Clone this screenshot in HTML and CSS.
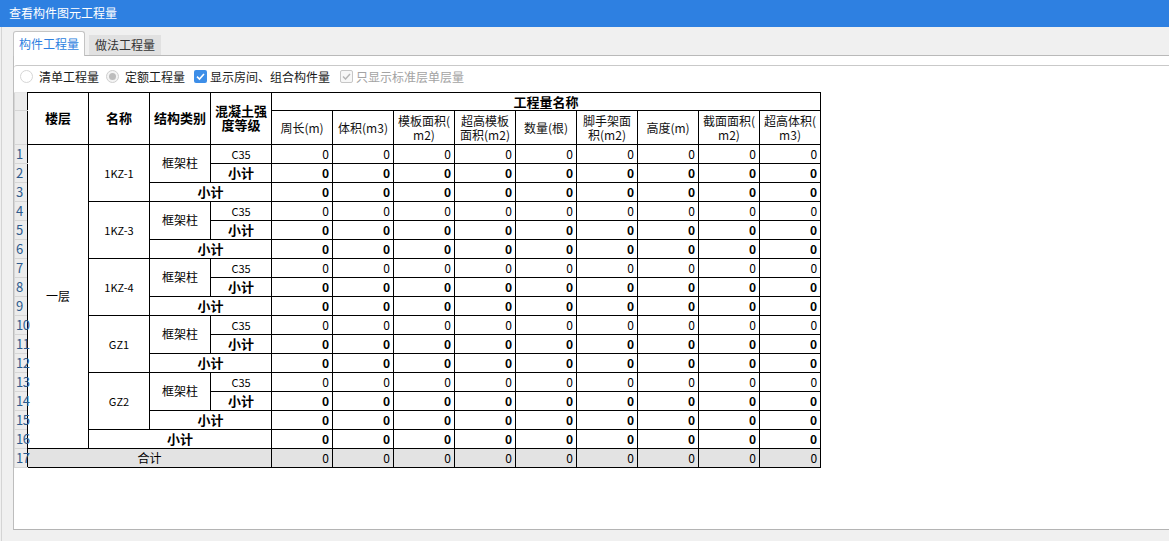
FILE: index.html
```html
<!DOCTYPE html>
<html lang="zh-CN">
<head>
<meta charset="utf-8">
<title>查看构件图元工程量</title>
<link rel="stylesheet" href="styles.css">
</head>
<body>
<div class="titlebar">查看构件图元工程量</div>
<div class="window">
  <div class="gutter"></div>
  <div class="main">
    <div class="tabs">
      <div class="tab active">构件工程量</div>
      <div class="tab">做法工程量</div>
    </div>
    <div class="panel">
      <div class="box">
        <div class="options">
          <span class="radio"></span><span class="lbl l1">清单工程量</span>
          <span class="radio dis"><span class="dot"></span></span><span class="lbl l2">定额工程量</span>
          <span class="check on"><svg viewBox="0 0 13 13" width="13" height="13"><path d="M3 6.6 L5.5 9 L10 4" fill="none" stroke="#fff" stroke-width="1.6"/></svg></span><span class="lbl l3">显示房间、组合构件量</span>
          <span class="check dis"><svg viewBox="0 0 13 13" width="13" height="13"><path d="M3 6.6 L5.5 9 L10 4" fill="none" stroke="#b4b4b4" stroke-width="1.4"/></svg></span><span class="lbl l4">只显示标准层单层量</span>
        </div>
        <table class="qty">
          <colgroup>
            <col class="c-rn"><col class="c"><col class="c"><col class="c"><col class="c">
            <col class="c"><col class="c"><col class="c"><col class="c"><col class="c"><col class="c"><col class="c"><col class="c"><col class="c">
          </colgroup>
          <thead>
            <tr class="h1">
              <td class="rn"></td>
              <th rowspan="2">楼层</th>
              <th rowspan="2">名称</th>
              <th rowspan="2">结构类别</th>
              <th rowspan="2" class="tight">混凝土强<br>度等级</th>
              <th colspan="9" class="group">工程量名称</th>
            </tr>
            <tr class="h2">
              <td class="rn"></td>
              <td class="sh">周长(m)</td>
              <td class="sh">体积(m3)</td>
              <td class="sh">模板面积(<br>m2)</td>
              <td class="sh">超高模板<br>面积(m2)</td>
              <td class="sh">数量(根)</td>
              <td class="sh">脚手架面<br>积(m2)</td>
              <td class="sh">高度(m)</td>
              <td class="sh">截面面积(<br>m2)</td>
              <td class="sh">超高体积(<br>m3)</td>
            </tr>
          </thead>
          <tbody>
            <tr>
              <td class="rn">1</td>
              <td rowspan="16" class="floor">一层</td>
              <td rowspan="3" class="name">1KZ-1</td>
              <td rowspan="2" class="kind">框架柱</td>
              <td class="grade">C35</td>
              <td class="v">0</td><td class="v">0</td><td class="v">0</td><td class="v">0</td><td class="v">0</td><td class="v">0</td><td class="v">0</td><td class="v">0</td><td class="v">0</td>
            </tr>
            <tr class="sub">
              <td class="rn">2</td>
              <td class="lab">小计</td>
              <td class="v">0</td><td class="v">0</td><td class="v">0</td><td class="v">0</td><td class="v">0</td><td class="v">0</td><td class="v">0</td><td class="v">0</td><td class="v">0</td>
            </tr>
            <tr class="sub">
              <td class="rn">3</td>
              <td colspan="2" class="lab">小计</td>
              <td class="v">0</td><td class="v">0</td><td class="v">0</td><td class="v">0</td><td class="v">0</td><td class="v">0</td><td class="v">0</td><td class="v">0</td><td class="v">0</td>
            </tr>
            <tr>
              <td class="rn">4</td>
              <td rowspan="3" class="name">1KZ-3</td>
              <td rowspan="2" class="kind">框架柱</td>
              <td class="grade">C35</td>
              <td class="v">0</td><td class="v">0</td><td class="v">0</td><td class="v">0</td><td class="v">0</td><td class="v">0</td><td class="v">0</td><td class="v">0</td><td class="v">0</td>
            </tr>
            <tr class="sub">
              <td class="rn">5</td>
              <td class="lab">小计</td>
              <td class="v">0</td><td class="v">0</td><td class="v">0</td><td class="v">0</td><td class="v">0</td><td class="v">0</td><td class="v">0</td><td class="v">0</td><td class="v">0</td>
            </tr>
            <tr class="sub">
              <td class="rn">6</td>
              <td colspan="2" class="lab">小计</td>
              <td class="v">0</td><td class="v">0</td><td class="v">0</td><td class="v">0</td><td class="v">0</td><td class="v">0</td><td class="v">0</td><td class="v">0</td><td class="v">0</td>
            </tr>
            <tr>
              <td class="rn">7</td>
              <td rowspan="3" class="name">1KZ-4</td>
              <td rowspan="2" class="kind">框架柱</td>
              <td class="grade">C35</td>
              <td class="v">0</td><td class="v">0</td><td class="v">0</td><td class="v">0</td><td class="v">0</td><td class="v">0</td><td class="v">0</td><td class="v">0</td><td class="v">0</td>
            </tr>
            <tr class="sub">
              <td class="rn">8</td>
              <td class="lab">小计</td>
              <td class="v">0</td><td class="v">0</td><td class="v">0</td><td class="v">0</td><td class="v">0</td><td class="v">0</td><td class="v">0</td><td class="v">0</td><td class="v">0</td>
            </tr>
            <tr class="sub">
              <td class="rn">9</td>
              <td colspan="2" class="lab">小计</td>
              <td class="v">0</td><td class="v">0</td><td class="v">0</td><td class="v">0</td><td class="v">0</td><td class="v">0</td><td class="v">0</td><td class="v">0</td><td class="v">0</td>
            </tr>
            <tr>
              <td class="rn">10</td>
              <td rowspan="3" class="name">GZ1</td>
              <td rowspan="2" class="kind">框架柱</td>
              <td class="grade">C35</td>
              <td class="v">0</td><td class="v">0</td><td class="v">0</td><td class="v">0</td><td class="v">0</td><td class="v">0</td><td class="v">0</td><td class="v">0</td><td class="v">0</td>
            </tr>
            <tr class="sub">
              <td class="rn">11</td>
              <td class="lab">小计</td>
              <td class="v">0</td><td class="v">0</td><td class="v">0</td><td class="v">0</td><td class="v">0</td><td class="v">0</td><td class="v">0</td><td class="v">0</td><td class="v">0</td>
            </tr>
            <tr class="sub">
              <td class="rn">12</td>
              <td colspan="2" class="lab">小计</td>
              <td class="v">0</td><td class="v">0</td><td class="v">0</td><td class="v">0</td><td class="v">0</td><td class="v">0</td><td class="v">0</td><td class="v">0</td><td class="v">0</td>
            </tr>
            <tr>
              <td class="rn">13</td>
              <td rowspan="3" class="name">GZ2</td>
              <td rowspan="2" class="kind">框架柱</td>
              <td class="grade">C35</td>
              <td class="v">0</td><td class="v">0</td><td class="v">0</td><td class="v">0</td><td class="v">0</td><td class="v">0</td><td class="v">0</td><td class="v">0</td><td class="v">0</td>
            </tr>
            <tr class="sub">
              <td class="rn">14</td>
              <td class="lab">小计</td>
              <td class="v">0</td><td class="v">0</td><td class="v">0</td><td class="v">0</td><td class="v">0</td><td class="v">0</td><td class="v">0</td><td class="v">0</td><td class="v">0</td>
            </tr>
            <tr class="sub">
              <td class="rn">15</td>
              <td colspan="2" class="lab">小计</td>
              <td class="v">0</td><td class="v">0</td><td class="v">0</td><td class="v">0</td><td class="v">0</td><td class="v">0</td><td class="v">0</td><td class="v">0</td><td class="v">0</td>
            </tr>
            <tr class="sub">
              <td class="rn">16</td>
              <td colspan="3" class="lab">小计</td>
              <td class="v">0</td><td class="v">0</td><td class="v">0</td><td class="v">0</td><td class="v">0</td><td class="v">0</td><td class="v">0</td><td class="v">0</td><td class="v">0</td>
            </tr>
            <tr class="total">
              <td class="rn">17</td>
              <td colspan="4" class="lab">合计</td>
              <td class="v">0</td><td class="v">0</td><td class="v">0</td><td class="v">0</td><td class="v">0</td><td class="v">0</td><td class="v">0</td><td class="v">0</td><td class="v">0</td>
            </tr>
          </tbody>
        </table>
      </div>
    </div>
    <div class="footer"></div>
  </div>
</div>
</body>
</html>
```

FILE: styles.css
```css
* { box-sizing: border-box; }
html, body {
  margin: 0;
  padding: 0;
}
body {
  width: 1169px;
  height: 541px;
  overflow: hidden;
  background: #f0f0f0;
  font-family: "Noto Sans CJK SC", "Microsoft YaHei", sans-serif;
  font-size: 12px;
  color: #1a1a1a;
  display: flex;
  flex-direction: column;
}
.titlebar {
  height: 27px;
  flex: none;
  background: #2e80e1;
  color: #ffffff;
  font-size: 12px;
  line-height: 26px;
  padding-left: 9px;
}
.window {
  flex: 1;
  display: flex;
  min-height: 0;
}
.gutter {
  width: 13px;
  flex: none;
  background: linear-gradient(to right, #f0f0f0 1px, #d4d4d4 1px, #d4d4d4 2px, #f0f0f0 2px);
}
.main {
  flex: 1;
  display: flex;
  flex-direction: column;
  min-width: 0;
}
.tabs {
  height: 29px;
  flex: none;
  display: flex;
  align-items: flex-end;
  border-bottom: 1px solid #b9b9b9;
}
.tab {
  width: 72px;
  height: 20px;
  background: #e1e1e1;
  color: #333;
  font-size: 12px;
  line-height: 20px;
  padding-left: 6px;
  margin-left: 4px;
}
.tab.active {
  margin-left: 0;
  height: 25px;
  margin-bottom: -1px;
  background: #ffffff;
  color: #2e7fe0;
  border: 1px solid #c4c4c4;
  border-bottom: none;
  border-radius: 3px 3px 0 0;
  line-height: 23px;
  padding-left: 5px;
}
.panel {
  flex: 1;
  background: #ffffff;
  border-left: 1px solid #bdbdbd;
  border-bottom: 1px solid #b4b4b4;
  padding-top: 9px;
  min-height: 0;
}
.box {
  border-top: 1px solid #c9c9c9;
  border-top-left-radius: 3px;
  height: 100%;
}
.options {
  height: 26px;
  display: flex;
  align-items: center;
  padding-left: 6px;
  padding-bottom: 5px;
  font-size: 12px;
  color: #1a1a1a;
}
.lbl { margin-left: 6px; }
.lbl.l1 { margin-right: 7px; }
.lbl.l2 { margin-right: 9px; }
.lbl.l3 { margin-left: 3px; margin-right: 10px; }
.lbl.l4 { margin-left: 3px; color: #a3a3a3; }
.radio {
  width: 13px;
  height: 13px;
  border-radius: 50%;
  border: 1px solid #d6d6d6;
  background: #fff;
  display: flex;
  align-items: center;
  justify-content: center;
}
.radio.dis { border-color: #cfcfcf; background: #f4f4f4; }
.radio .dot {
  width: 7px;
  height: 7px;
  border-radius: 50%;
  background: #bdbdbd;
}
.check {
  width: 13px;
  height: 13px;
  border-radius: 2px;
  display: block;
}
.check svg { display: block; }
.check.on { background: #3d8ee8; }
.check.dis { border: 1px solid #c6c6c6; background: #f7f7f7; }
.check.dis svg { margin: -1px; }

.qty {
  border-collapse: collapse;
  table-layout: fixed;
  width: 806px;
  font-size: 12px;
  color: #000;
}
.qty col.c-rn { width: 13px; }
.qty col.c { width: 61px; }
.qty td, .qty th {
  border: 1px solid #000;
  padding: 0;
  overflow: hidden;
  white-space: nowrap;
}
.qty th {
  font-weight: bold;
  font-size: 13px;
  text-align: center;
  line-height: 15px;
  padding-bottom: 2px;
  overflow: visible;
}
.qty th.tight { line-height: 14px; }
.qty tr.h1 { height: 18px; }
.qty th.group { line-height: 15px; padding-bottom: 1px; }
.qty tr.h2 { height: 34px; }
.qty tbody tr { height: 19px; }
.qty td.rn {
  background: #ececec;
  border: 1px solid #d6d6d6;
  border-right: 1px solid #000;
  color: #2d5b8e;
  font-size: 13px;
  line-height: 16px;
  padding-left: 1px;
  text-align: left;
  overflow: visible;
  letter-spacing: -0.5px;
}
.qty thead td.rn { border-top-color: #e6e6e6; }
.qty td.sh {
  text-align: center;
  font-size: 12px;
  line-height: 14px;
  color: #111;
}
.qty td.v {
  text-align: right;
  padding-right: 3px;
  line-height: 16px;
  padding-bottom: 1px;
}
.qty td.floor, .qty td.name, .qty td.kind, .qty td.grade, .qty td.lab {
  text-align: center;
  line-height: 16px;
  padding-bottom: 1px;
}
.qty td.name { font-size: 11px; }
.qty td.grade { font-size: 11px; }
.qty tr.sub td.v, .qty tr.sub td.lab {
  font-weight: bold;
}
.qty tr.sub td.lab { font-size: 13px; }
.qty tr.total td.v, .qty tr.total td.lab {
  background: #e3e3e3;
  font-weight: normal;
}
.footer {
  height: 11px;
  flex: none;
  background: #f0f0f0;
}
```
